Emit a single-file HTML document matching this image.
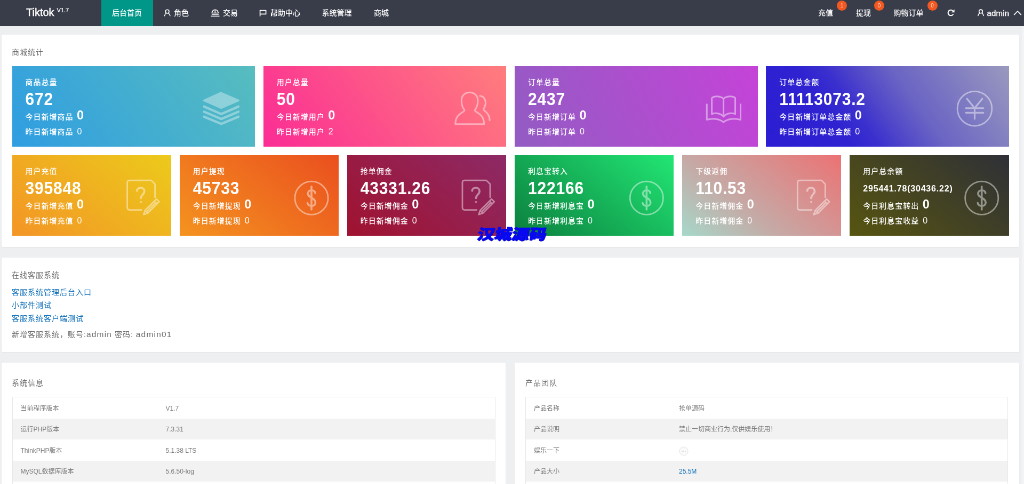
<!DOCTYPE html>
<html lang="zh-CN">
<head>
<meta charset="utf-8">
<title>Tiktok 后台首页</title>
<style>
*{box-sizing:border-box;margin:0;padding:0}
html,body{width:1024px;height:484px;overflow:hidden;background:#eeeff0}
body{font-family:"Liberation Sans","Noto Sans CJK SC",sans-serif;font-size:14px;color:#666}
#r{position:absolute;left:0;top:0;width:1920px;height:908px;transform:scale(.5333333);transform-origin:0 0;background:#eeeff0;overflow:hidden;will-change:transform}
a{color:#0a6cb8;text-decoration:none}
/* header */
.hd{position:absolute;left:0;top:0;width:1920px;height:48.6px;background:#393d49}
.hd .it{font-weight:500;position:absolute;top:0;height:48.6px;line-height:49.5px;color:#fff;font-size:14px;white-space:nowrap}
.hd .act{background:#009688;text-align:center}
.logo{position:absolute;left:49px;top:0;height:48.6px;line-height:47.5px;color:#fff;font-size:20px;-webkit-text-stroke:.45px #fff;white-space:nowrap}
.logo sup{font-size:11px;position:relative;top:0.5px;margin-left:5px;-webkit-text-stroke:.2px #fff;vertical-align:super;line-height:1}
.bdg{position:absolute;width:19px;height:19px;border-radius:9.5px;background:#f25822;color:#ffd9c4;font-size:10px;line-height:19px;text-align:center;top:1px}
.hd svg{position:absolute}
/* panels */
.pn{position:absolute;background:#fff;border-radius:2px;box-shadow:0 1px 2px rgba(0,0,0,.05)}
.la{font-size:15.5px;letter-spacing:1.2px}
.tt{position:absolute;font-size:14px;letter-spacing:1px;color:#6b6b6b;line-height:30px;height:30px;white-space:nowrap}
/* stat cards */
.sc{position:absolute;height:150.8px;color:#fff;font-weight:500;letter-spacing:1px;font-size:14px;white-space:nowrap;overflow:hidden}
.sc div{position:absolute;left:25px;height:30px;line-height:30px}
.sc .a{top:15px}
.sc .b{top:47px;font-size:30px;font-weight:bold;letter-spacing:.8px;transform:scaleY(1.08);transform-origin:0 55%}
.sc .b.s{font-size:16px;letter-spacing:.8px;top:47.5px}
.sc .c{top:76.7px}
.sc .c b{font-size:23.5px;margin-left:6.5px;position:relative;top:.6px}
.sc .d{top:108.2px}
.sc .d i{font-style:normal;font-size:16px;margin-left:7px}
.ic{position:absolute;overflow:visible}
.ic *{fill:none;stroke:#fff;stroke-linecap:round;stroke-linejoin:round}
/* tables */
.tb{position:absolute;border:1px solid #e8e8e8;font-size:12px;color:#7a7a7a}
.tb .rw{position:relative;height:39.4px;line-height:39.4px;white-space:nowrap}
.tb .rw:nth-child(even){background:#f2f2f2}
.tb .rw span{position:absolute;left:15px;top:1.6px}
.tb .rw span+span{left:287px}
.wm{position:absolute;left:960px;top:439.5px;font-family:"Liberation Sans","Noto Sans CJK SC",sans-serif;font-weight:900;font-size:27px;line-height:30px;color:#0808f2;white-space:nowrap;transform:translate(-50%,-50%) skewX(-12deg) scaleX(1.2);-webkit-text-stroke:1.1px #0808f2;letter-spacing:0;text-shadow:.8px .8px 0 #050590}
</style>
</head>
<body>
<div id="r">

<!-- header -->
<div class="hd">
  <div class="logo">Tiktok<sup>V1.7</sup></div>
  <div class="it act" style="left:189.5px;width:97px">后台首页</div>
  <div class="it" style="left:326px">角色</div>
  <div class="it" style="left:418px">交易</div>
  <div class="it" style="left:507px">帮助中心</div>
  <div class="it" style="left:603.5px">系统管理</div>
  <div class="it" style="left:701px">商城</div>
  <div class="it" style="left:1534px">充值</div><span class="bdg" style="left:1569px">1</span>
  <div class="it" style="left:1605px">提现</div><span class="bdg" style="left:1639px">0</span>
  <div class="it" style="left:1675.5px">购物订单</div><span class="bdg" style="left:1738.5px">0</span>
  <div class="it" style="left:1850.5px;font-size:15px;letter-spacing:.2px;-webkit-text-stroke:.35px #fff">admin</div>
</div>

<div style="position:absolute;left:1915.5px;top:49.5px;width:5px;height:860px;background:#f3f4f5"></div>
<!-- panel 1 -->
<div class="pn" style="left:2.5px;top:64.5px;width:1908.5px;height:398px"></div>
<div class="tt" style="left:22px;top:82.5px">商城统计</div>

<div class="sc" style="left:22.5px;top:124px;width:455.6px;background:linear-gradient(-125deg,#57bdbf,#2f9de2)">
  <div class="a">商品总量</div><div class="b">672</div><div class="c">今日新增商品<b>0</b></div><div class="d">昨日新增商品<i>0</i></div>
</div>
<div class="sc" style="left:493.8px;top:124px;width:455.6px;background:linear-gradient(-125deg,#ff7d7d,#fb2c95)">
  <div class="a">用户总量</div><div class="b">50</div><div class="c">今日新增用户<b>0</b></div><div class="d">昨日新增用户<i>2</i></div>
</div>
<div class="sc" style="left:965px;top:124px;width:455.6px;background:linear-gradient(-113deg,#c543d8,#925cc3)">
  <div class="a">订单总量</div><div class="b">2437</div><div class="c">今日新增订单<b>0</b></div><div class="d">昨日新增订单<i>0</i></div>
</div>
<div class="sc" style="left:1436.3px;top:124px;width:455.6px;background:linear-gradient(-125deg,#9a99be 0%,#6a64c4 40%,#5148c9 52%,#3a2fce 62%,#2e22d1 72%,#2b1ed3 100%)">
  <div class="a">订单总金额</div><div class="b">11113073.2</div><div class="c">今日新增订单总金额<b>0</b></div><div class="d">昨日新增订单总金额<i>0</i></div>
</div>

<div class="sc" style="left:22.5px;top:291px;width:298.3px;background:linear-gradient(-141deg,#ecca1b,#f39526)">
  <div class="a">用户充值</div><div class="b">395848</div><div class="c">今日新增充值<b>0</b></div><div class="d">昨日新增充值<i>0</i></div>
</div>
<div class="sc" style="left:336.7px;top:291px;width:298.3px;background:linear-gradient(-141deg,#ea4f1f,#f4931f)">
  <div class="a">用户提现</div><div class="b">45733</div><div class="c">今日新增提现<b>0</b></div><div class="d">昨日新增提现<i>0</i></div>
</div>
<div class="sc" style="left:650.8px;top:291px;width:298.3px;background:linear-gradient(-141deg,#8d2a66,#a0122f)">
  <div class="a">抢单佣金</div><div class="b">43331.26</div><div class="c">今日新增佣金<b>0</b></div><div class="d">昨日新增佣金<i>0</i></div>
</div>
<div class="sc" style="left:965px;top:291px;width:298.3px;background:linear-gradient(-141deg,#22e674,#0b7f3e)">
  <div class="a">利息宝转入</div><div class="b">122166</div><div class="c">今日新增利息宝<b>0</b></div><div class="d">昨日新增利息宝<i>0</i></div>
</div>
<div class="sc" style="left:1279.2px;top:291px;width:298.3px;background:linear-gradient(-141deg,#ec7274 0%,#c5aaa6 63%,#a6d8ca 100%)">
  <div class="a">下级返佣</div><div class="b">110.53</div><div class="c">今日新增佣金<b>0</b></div><div class="d">昨日新增佣金<i>0</i></div>
</div>
<div class="sc" style="left:1593.3px;top:291px;width:298.3px;background:linear-gradient(-141deg,#2f3037,#575510)">
  <div class="a">用户总余额</div><div class="b s">295441.78(30436.22)</div><div class="c">今日利息宝转出<b>0</b></div><div class="d">今日利息宝收益<i>0</i></div>
</div>

<svg class="ov" width="1920" height="908" viewBox="0 0 1920 908" style="position:absolute;left:0;top:0;pointer-events:none">
<g transform="translate(356.25,150.00) scale(0.21307)" opacity="0.36"><path d="M122,180 L272,113 L428,180 L275,247 Z" fill="#fff" stroke="#fff" stroke-width="15" stroke-linejoin="round"/><path d="M124,234 L275,299 L426,234 M124,279 L275,343 L426,279 M124,323 L275,386 L426,323" fill="none" stroke="#fff" stroke-width="21" stroke-linecap="round" stroke-linejoin="round"/></g>
<g transform="translate(825.00,150.00) scale(0.21307)" opacity="0.45"><g fill="none" stroke="#fff" stroke-width="14" stroke-linecap="round" stroke-linejoin="round"><path d="M216,266 C196,240 189,215 189,182 C189,136 221,109 261,109 C301,109 333,136 333,182 C333,215 326,240 306,266 C306,286 388,292 388,388 L135,388 C135,292 216,286 216,266 Z"/><path d="M352,140 C402,146 416,205 382,258 C384,272 438,290 437,354"/></g></g>
<g transform="translate(1293.75,150.00) scale(0.21307)" opacity="0.45"><g fill="none" stroke="#fff" stroke-width="14" stroke-linecap="round" stroke-linejoin="round"><path d="M295,165 L295,322"/><path d="M295,165 C270,140 215,138 192,158 L192,300 C225,285 270,293 295,322"/><path d="M295,165 C320,140 375,138 398,158 L398,300 C365,285 320,293 295,322"/><path d="M148,215 L148,350 C200,335 262,340 295,372 C328,340 390,335 445,350 L445,215"/></g></g>
<g transform="translate(1762.50,150.00) scale(0.21307)" opacity="0.45"><g fill="none" stroke="#fff" stroke-linecap="round" stroke-linejoin="round"><circle cx="305" cy="252" r="152" stroke-width="13"/><path d="M238,165 L305,248 L372,165 M228,248 H382 M228,288 H382 M305,248 V342" stroke-width="15"/></g></g>
<g transform="translate(196.88,309.38) scale(0.21307)" opacity="0.45"><g fill="none" stroke="#fff" stroke-width="13" stroke-linecap="round" stroke-linejoin="round"><path d="M440,285 L440,168 L407,135 L217,135 Q196,135 196,156 L196,374 Q196,395 217,395 L322,395"/><path d="M282,228 C282,190 347,190 347,230 C347,258 316,262 316,292" stroke-width="17"/><circle cx="316" cy="326" r="7" fill="#fff" stroke-width="4"/><g transform="translate(340,436) rotate(-45)"><path d="M0,0 L34,-17 L176,-17 L176,17 L34,17 Z M34,-17 V17 M150,-17 V17 M34,0 H150"/></g></g></g>
<g transform="translate(825.22,309.38) scale(0.21307)" opacity="0.45"><g fill="none" stroke="#fff" stroke-width="13" stroke-linecap="round" stroke-linejoin="round"><path d="M440,285 L440,168 L407,135 L217,135 Q196,135 196,156 L196,374 Q196,395 217,395 L322,395"/><path d="M282,228 C282,190 347,190 347,230 C347,258 316,262 316,292" stroke-width="17"/><circle cx="316" cy="326" r="7" fill="#fff" stroke-width="4"/><g transform="translate(340,436) rotate(-45)"><path d="M0,0 L34,-17 L176,-17 L176,17 L34,17 Z M34,-17 V17 M150,-17 V17 M34,0 H150"/></g></g></g>
<g transform="translate(1453.56,309.38) scale(0.21307)" opacity="0.45"><g fill="none" stroke="#fff" stroke-width="13" stroke-linecap="round" stroke-linejoin="round"><path d="M440,285 L440,168 L407,135 L217,135 Q196,135 196,156 L196,374 Q196,395 217,395 L322,395"/><path d="M282,228 C282,190 347,190 347,230 C347,258 316,262 316,292" stroke-width="17"/><circle cx="316" cy="326" r="7" fill="#fff" stroke-width="4"/><g transform="translate(340,436) rotate(-45)"><path d="M0,0 L34,-17 L176,-17 L176,17 L34,17 Z M34,-17 V17 M150,-17 V17 M34,0 H150"/></g></g></g>
<g transform="translate(515.62,309.38) scale(0.21307)" opacity="0.45"><g fill="none" stroke="#fff" stroke-linecap="round" stroke-linejoin="round"><circle cx="321" cy="290" r="146" stroke-width="13"/><path d="M354,248 C352,214 290,212 289,252 C288,288 356,288 356,330 C356,370 290,370 286,334 M321,190 V392" stroke-width="17"/></g></g>
<g transform="translate(1143.97,309.38) scale(0.21307)" opacity="0.45"><g fill="none" stroke="#fff" stroke-linecap="round" stroke-linejoin="round"><circle cx="321" cy="290" r="146" stroke-width="13"/><path d="M354,248 C352,214 290,212 289,252 C288,288 356,288 356,330 C356,370 290,370 286,334 M321,190 V392" stroke-width="17"/></g></g>
<g transform="translate(1772.31,309.38) scale(0.21307)" opacity="0.45"><g fill="none" stroke="#fff" stroke-linecap="round" stroke-linejoin="round"><circle cx="321" cy="290" r="146" stroke-width="13"/><path d="M354,248 C352,214 290,212 289,252 C288,288 356,288 356,330 C356,370 290,370 286,334 M321,190 V392" stroke-width="17"/></g></g>
<g fill="none" stroke="#fff" stroke-width="1.6" stroke-linecap="round" stroke-linejoin="round"><circle cx="313.7" cy="21.6" r="3.3"/><path d="M308.5,29.6 C308.9,27 310.2,25.6 311.7,24.6 M318.9,29.6 C318.5,27 317.2,25.6 315.7,24.6"/><circle cx="1839" cy="21.400000000000002" r="3.3"/><path d="M1833.8,29.4 C1834.2,26.8 1835.5,25.4 1837,24.4 M1844.2,29.4 C1843.8,26.8 1842.5,25.4 1841,24.4"/><path d="M396,30.3 H411 M397.5,27 H409.5 M397.2,24.5 C398,20 400,18.2 403.3,18.2 C406.6,18.2 408.6,20 409.4,24.5 Z M403.3,18.2 V24.5"/><path d="M487.6,19 V30 M487.6,19.6 H498.6 V26.4 H487.6" stroke-width="1.7"/><path d="M1901.6,27.6 L1908,21 L1914.4,27.6" stroke-width="1.7"/></g><g fill="none" stroke="#fff" stroke-width="2.1" stroke-linecap="butt"><path d="M1787.2,21.2 A5.2,5.2 0 1 0 1787.4,26.4"/></g><path d="M1789.6,17.6 V23.2 H1784 Z" fill="#fff"/></svg>
<div class="wm">汉城源码</div>

<!-- panel 2 -->
<div class="pn" style="left:2.5px;top:482.5px;width:1908.5px;height:177.5px"></div>
<div class="tt" style="left:22px;top:501px">在线客服系统</div>
<div class="tt" style="left:22px;top:533px"><a>客服系统管理后台入口</a></div>
<div class="tt" style="left:22px;top:557.3px"><a>小部件测试</a></div>
<div class="tt" style="left:22px;top:581.6px"><a>客服系统客户端测试</a></div>
<div class="tt" style="left:22px;top:612px">新增客服系统，账号:<span class="la">admin</span> 密码: <span class="la">admin01</span></div>

<!-- panel 3 -->
<div class="pn" style="left:2.5px;top:680px;width:945.5px;height:260px"></div>
<div class="tt" style="left:22px;top:703px">系统信息</div>
<div class="tb" style="left:22.5px;top:744.4px;width:906px">
  <div class="rw"><span>当前程序版本</span><span>V1.7</span></div>
  <div class="rw"><span>运行PHP版本</span><span>7.3.31</span></div>
  <div class="rw"><span>ThinkPHP版本</span><span>5.1.38 LTS</span></div>
  <div class="rw"><span>MySQL数据库版本</span><span>5.6.50-log</span></div>
  <div class="rw"><span>服务器操作系统</span><span>Linux</span></div>
</div>

<div class="pn" style="left:965px;top:680px;width:946px;height:260px"></div>
<div class="tt" style="left:985px;top:703px">产品团队</div>
<div class="tb" style="left:985px;top:744.4px;width:905px">
  <div class="rw"><span>产品名称</span><span>抢单源码</span></div>
  <div class="rw"><span>产品说明</span><span>禁止一切商业行为,仅供娱乐使用！</span></div>
  <div class="rw"><span>娱乐一下</span><span><svg width="18" height="18" viewBox="0 0 18 18" style="position:absolute;left:0;top:11px"><circle cx="9" cy="9" r="8" fill="#fafafa" stroke="#e2e2e2" stroke-width="1"/><path d="M5,9 H13" stroke="#d4d4d4" stroke-width="1.4" stroke-dasharray="2 1"/></svg></span></div>
  <div class="rw"><span>产品大小</span><span><a>25.5M</a></span></div>
  <div class="rw"><span>在线体验</span><span></span></div>
</div>

</div>
</body>
</html>
